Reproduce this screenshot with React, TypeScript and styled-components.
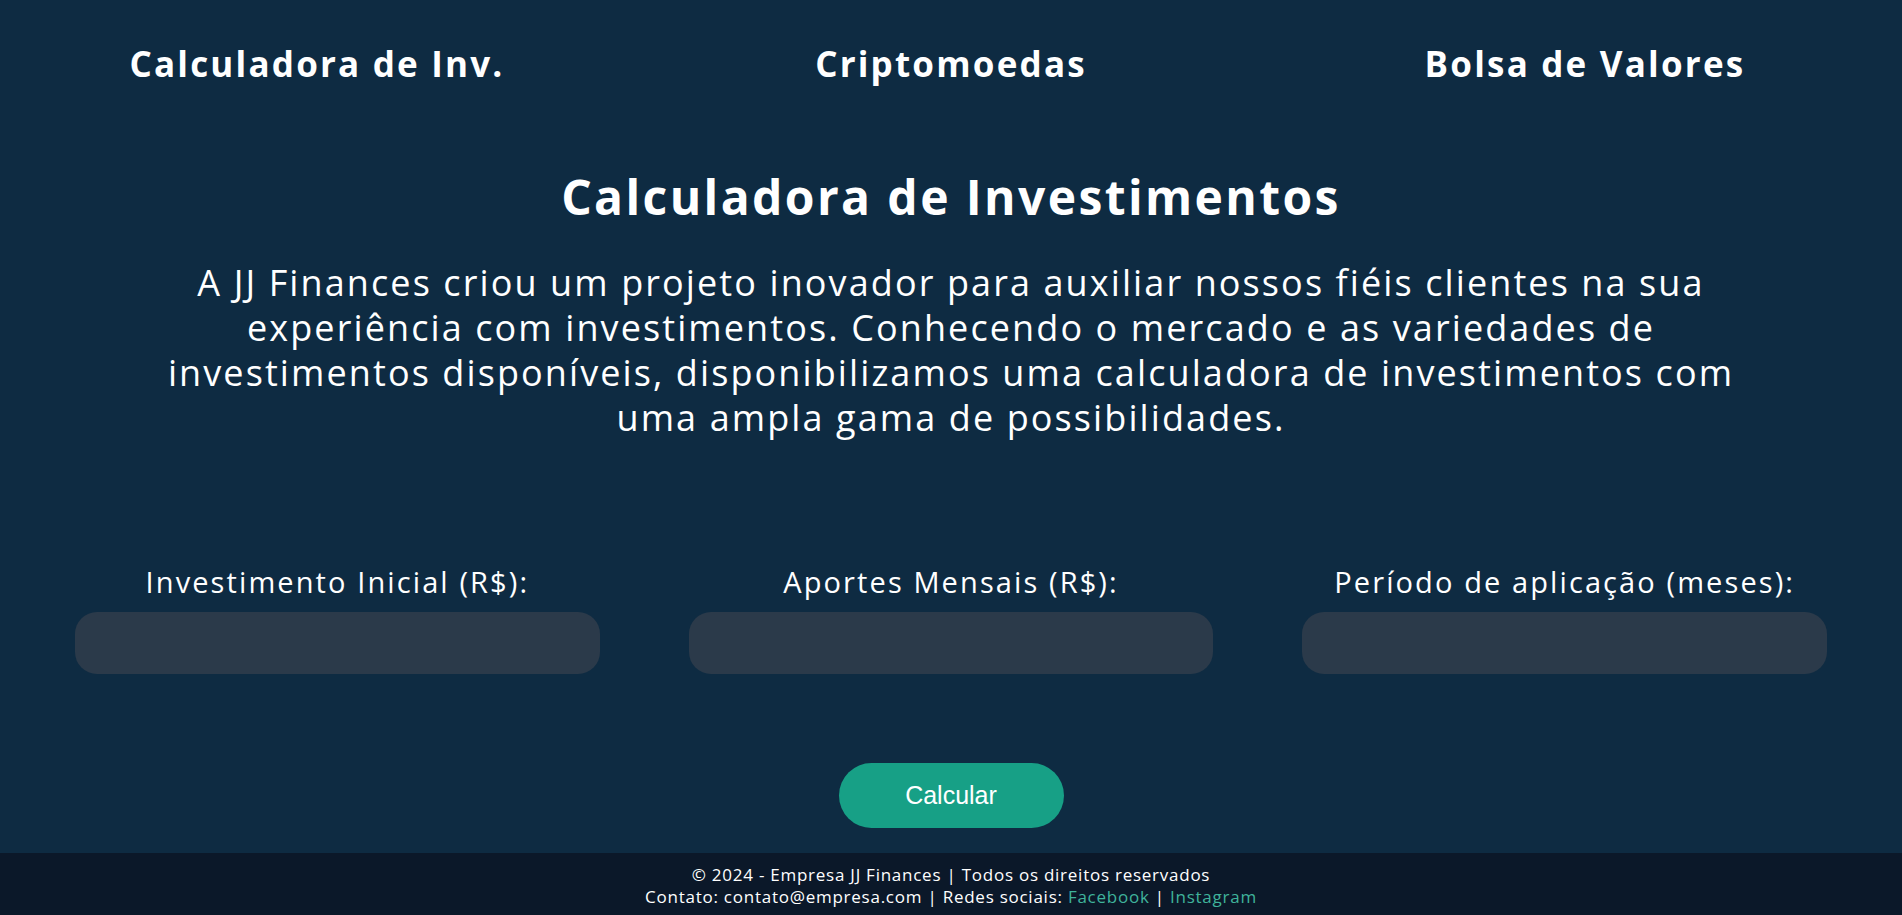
import styled, { createGlobalStyle } from 'styled-components';

const GlobalStyle = createGlobalStyle`
  * { box-sizing: border-box; }
  body {
    margin: 0;
    background: #0e2b42;
    color: #ffffff;
    font-family: "Open Sans", "Noto Sans", sans-serif;
  }
`;

const Page = styled.div`
  min-height: 100vh;
  display: flex;
  flex-direction: column;
`;

const Nav = styled.nav`
  height: 126px;
  display: flex;
  align-items: center;
`;

const NavItem = styled.a`
  flex: 1;
  text-align: center;
  font-size: 35px;
  letter-spacing: 2.2px;
  font-weight: 700;
  color: #ffffff;
  text-decoration: none;
`;

const Main = styled.main`
  flex: 1;
  display: flex;
  flex-direction: column;
  align-items: center;
`;

const Title = styled.h1`
  margin: 43px 0 0;
  font-size: 48px;
  letter-spacing: 2.4px;
  line-height: 56px;
  font-weight: 700;
`;

const Intro = styled.p`
  margin: 35px 0 0;
  max-width: 1640px;
  text-align: center;
  font-size: 36px;
  letter-spacing: 2.1px;
  line-height: 45px;
  font-weight: 400;
`;

const Fields = styled.div`
  width: 100%;
  margin-top: 125px;
  padding: 0 75px;
  display: grid;
  grid-template-columns: repeat(3, 1fr);
  column-gap: 89px;
`;

const Field = styled.label`
  display: flex;
  flex-direction: column;
  align-items: center;
  gap: 13px;
`;

const FieldLabel = styled.span`
  font-size: 29px;
  letter-spacing: 2.1px;
  line-height: 34px;
`;

const Input = styled.input`
  width: 100%;
  height: 62px;
  border: none;
  border-radius: 22px;
  background: #2b3a4a;
  color: #ffffff;
  font-size: 20px;
  padding: 0 20px;
  outline: none;
`;

const Button = styled.button`
  margin-top: 89px;
  width: 225px;
  height: 65px;
  border: none;
  border-radius: 33px;
  background: #17a086;
  color: #ffffff;
  font-family: "Liberation Sans", Arial, sans-serif;
  font-size: 25px;
  cursor: pointer;
`;

const Footer = styled.footer`
  margin-top: 24px;
  background: #0b1829;
  padding: 11px 0 7px;
  text-align: center;
  font-size: 17px;
  letter-spacing: 0.75px;
  line-height: 22px;
`;

const Link = styled.a`
  color: #3fb39b;
  text-decoration: none;
`;

export default function App() {
  return (
    <Page>
      <GlobalStyle />
      <Nav>
        <NavItem href="#">Calculadora de Inv.</NavItem>
        <NavItem href="#">Criptomoedas</NavItem>
        <NavItem href="#">Bolsa de Valores</NavItem>
      </Nav>
      <Main>
        <Title>Calculadora de Investimentos</Title>
        <Intro>
          A JJ Finances criou um projeto inovador para auxiliar nossos fiéis clientes na sua
          experiência com investimentos. Conhecendo o mercado e as variedades de investimentos
          disponíveis, disponibilizamos uma calculadora de investimentos com uma ampla gama de
          possibilidades.
        </Intro>
        <Fields>
          <Field>
            <FieldLabel>Investimento Inicial (R$):</FieldLabel>
            <Input type="number" />
          </Field>
          <Field>
            <FieldLabel>Aportes Mensais (R$):</FieldLabel>
            <Input type="number" />
          </Field>
          <Field>
            <FieldLabel>Período de aplicação (meses):</FieldLabel>
            <Input type="number" />
          </Field>
        </Fields>
        <Button>Calcular</Button>
      </Main>
      <Footer>
        <div>© 2024 - Empresa JJ Finances | Todos os direitos reservados</div>
        <div>
          Contato: contato@empresa.com | Redes sociais: <Link href="#">Facebook</Link> |{' '}
          <Link href="#">Instagram</Link>
        </div>
      </Footer>
    </Page>
  );
}
